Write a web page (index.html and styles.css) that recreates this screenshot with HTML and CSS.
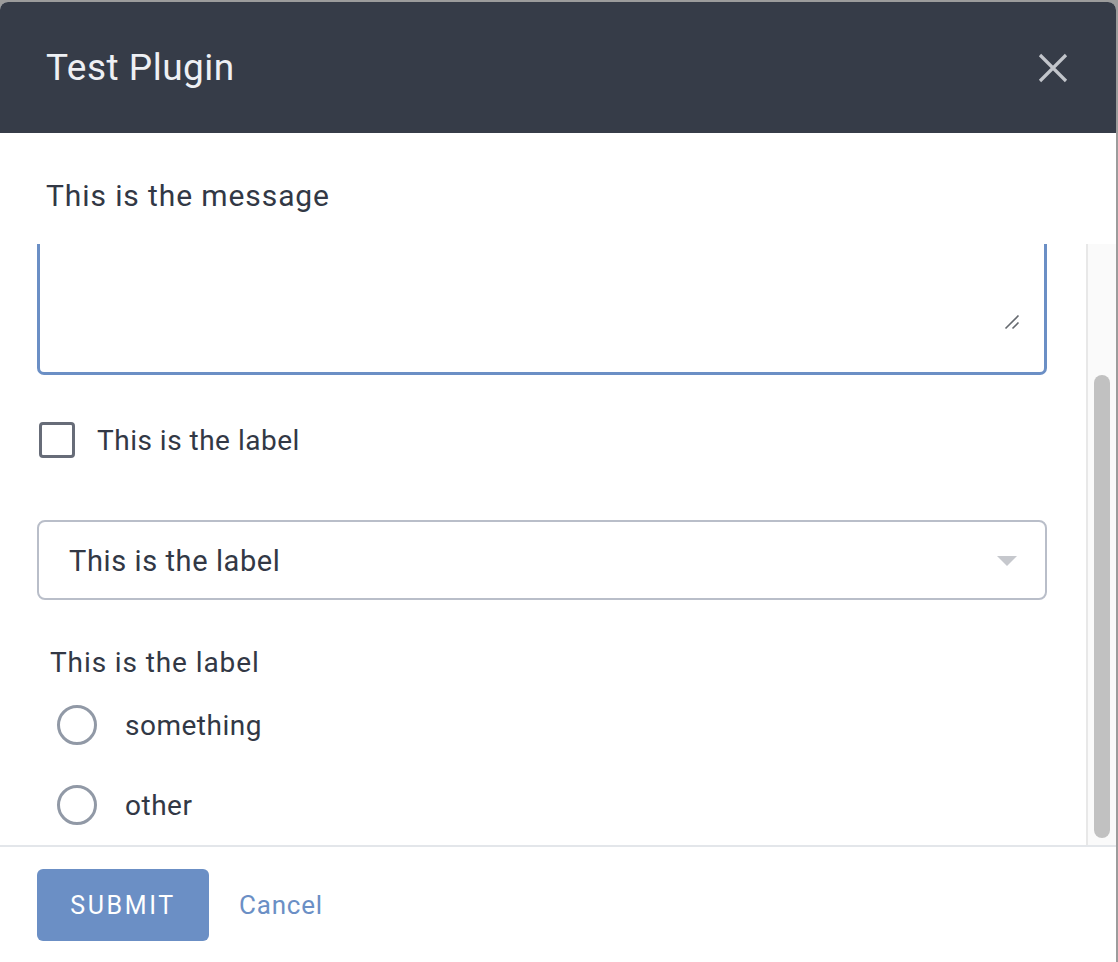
FILE: index.html
```html
<!DOCTYPE html>
<html>
<head>
<meta charset="utf-8">
<link rel="stylesheet" href="styles.css">
</head>
<body>
<div class="modal">
  <header class="modal-header">
    <h1 class="modal-title">Test Plugin</h1>
    <button class="close-btn" aria-label="Close">
      <svg width="30" height="30" viewBox="0 0 30 30"><path d="M2 2 L28 28 M28 2 L2 28" stroke="#c2c5cb" stroke-width="3.2" fill="none"/></svg>
    </button>
  </header>
  <div class="modal-message">This is the message</div>
  <div class="scroll-area">
    <div class="scroll-viewport" id="scroll">
      <div class="scroll-content">
        <div class="spacer"></div>
        <div class="textarea-wrap">
          <textarea class="textarea"></textarea>
          <svg class="grip" width="16" height="16" viewBox="0 0 16 16"><path d="M1.5 14.5 L14.5 1.5 M8.5 14.5 L14.5 8.5" stroke="#666a70" stroke-width="1.6" fill="none"/></svg>
        </div>
        <label class="checkbox-row">
          <span class="checkbox"></span>
          <span class="checkbox-label">This is the label</span>
        </label>
        <div class="select">
          <span class="select-text">This is the label</span>
          <span class="select-arrow"></span>
        </div>
        <div class="radio-group">
          <div class="radio-group-label">This is the label</div>
          <div class="radio-row first"><span class="radio"></span><span class="radio-label">something</span></div>
          <div class="radio-row"><span class="radio"></span><span class="radio-label">other</span></div>
        </div>
      </div>
    </div>
    <div class="scrollbar"><div class="scrollbar-thumb"></div></div>
  </div>
  <footer class="modal-footer">
    <button class="btn-submit">SUBMIT</button>
    <button class="btn-cancel">Cancel</button>
  </footer>
</div>
<script src="script.js"></script>
</body>
</html>
```

FILE: styles.css
```css
html, body {
  margin: 0;
  padding: 0;
  background: #9c9c9c;
  height: 962px;
  overflow: hidden;
}
body {
  font-family: Roboto, "Liberation Sans", sans-serif;
  color: #323845;
}
.modal {
  margin-top: 2px;
  width: 1116px;
  height: 960px;
  background: #ffffff;
  border-radius: 8px 8px 0 0;
  display: flex;
  flex-direction: column;
  overflow: hidden;
}
.modal-header {
  height: 131px;
  flex: none;
  background: #363c48;
  display: flex;
  align-items: center;
  justify-content: space-between;
  padding: 0 48px 0 46px;
}
.modal-title {
  margin: 0;
  font-weight: 400;
  font-size: 37px;
  letter-spacing: 0.5px;
  color: #eef0f4;
}
.close-btn {
  background: none;
  border: none;
  padding: 0;
  width: 30px;
  height: 30px;
  display: flex;
}
.modal-message {
  flex: none;
  height: 111px;
  padding: 14px 46px 0;
  box-sizing: border-box;
  display: flex;
  align-items: center;
  font-size: 30px;
  letter-spacing: 0.9px;
}
.scroll-area {
  flex: none;
  height: 601px;
  display: flex;
}
.scroll-viewport {
  flex: 1;
  overflow: hidden;
}
.scrollbar {
  flex: none;
  width: 30px;
  background: #fafafa;
  border-left: 2px solid #e8e8e8;
  padding: 131px 5px 7px 6px;
  box-sizing: border-box;
}
.scrollbar-thumb {
  height: 463px;
  width: 16px;
  background: #c1c1c1;
  border-radius: 8px;
}
.scroll-content {
  padding: 0 39px 40px 37px;
}
.spacer {
  height: 120px;
}
.textarea-wrap {
  display: flex;
  position: relative;
}
.textarea {
  flex: 1;
  height: 181px;
  box-sizing: border-box;
  border: 3px solid #6b8fc5;
  border-radius: 7px;
  outline: none;
  resize: none;
  font-family: Roboto, sans-serif;
  font-size: 26px;
  margin: 0;
}
.grip {
  position: absolute;
  right: 27px;
  bottom: 45px;
}
.checkbox-row {
  display: flex;
  align-items: center;
  margin-top: 47px;
  padding-left: 2px;
  gap: 22px;
}
.checkbox {
  width: 36px;
  height: 36px;
  box-sizing: border-box;
  border: 3px solid #676c78;
  border-radius: 4px;
  flex: none;
}
.checkbox-label {
  font-size: 28px;
  letter-spacing: 0.5px;
}
.select {
  margin-top: 62px;
  height: 80px;
  box-sizing: border-box;
  border: 2px solid #b9bec9;
  border-radius: 8px;
  display: flex;
  align-items: center;
  justify-content: space-between;
  padding: 2px 28px 0 30px;
}
.select-text {
  font-size: 29px;
  letter-spacing: 0.6px;
}
.select-arrow {
  width: 0;
  height: 0;
  border-left: 10px solid transparent;
  border-right: 10px solid transparent;
  border-top: 10px solid #c6c8cd;
}
.radio-group {
  margin-top: 46px;
  padding-left: 13px;
}
.radio-group-label {
  font-size: 28px;
  letter-spacing: 0.9px;
  line-height: 34px;
}
.radio-row {
  display: flex;
  align-items: center;
  gap: 28px;
  height: 80px;
  padding-left: 7px;
}
.radio-row.first {
  margin-top: 5px;
}
.radio {
  width: 40px;
  height: 40px;
  box-sizing: border-box;
  border: 3px solid #9199a6;
  border-radius: 50%;
  flex: none;
}
.radio-label {
  font-size: 28px;
  letter-spacing: 0.5px;
}
.modal-footer {
  flex: none;
  border-top: 2px solid #e3e6ea;
  display: flex;
  align-items: center;
  gap: 30px;
  padding: 22px 37px;
}
.btn-submit {
  width: 172px;
  height: 72px;
  border: none;
  border-radius: 6px;
  background: #6b8fc5;
  color: #ffffff;
  font-family: Roboto, sans-serif;
  font-size: 25px;
  letter-spacing: 2.6px;
  padding: 0;
}
.btn-cancel {
  background: none;
  border: none;
  padding: 0;
  color: #6b8fc5;
  font-family: Roboto, sans-serif;
  font-size: 26px;
  letter-spacing: 0.8px;
}
```

FILE: script.js
```js
document.getElementById('scroll').scrollTop = 170;
```
